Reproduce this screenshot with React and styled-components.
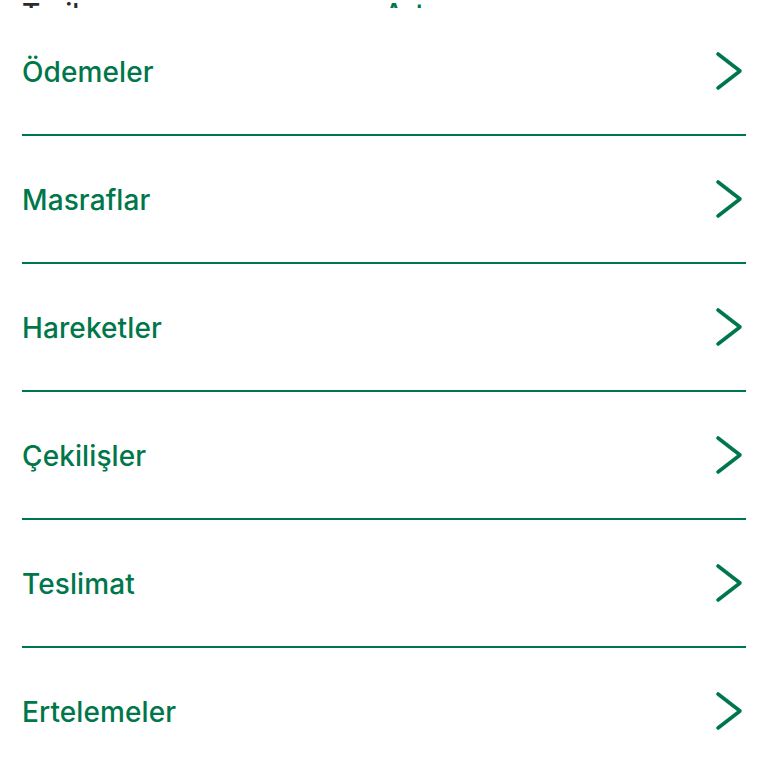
import React from "react";
import styled, { createGlobalStyle } from "styled-components";

const GREEN = "#00774b";

const Global = createGlobalStyle`
  html, body { margin: 0; padding: 0; background: #ffffff; }
  body { font-family: Inter, "Liberation Sans", Arial, sans-serif; }
`;

const Page = styled.div`
  padding: 0 22px;
  overflow: hidden;
  height: 768px;
  box-sizing: border-box;
`;

const Header = styled.div`
  display: grid;
  grid-template-columns: 1fr 1fr;
  height: 8px;
  overflow: hidden;
  align-items: end;
`;

const HeaderText = styled.span`
  font-size: 28px;
  font-weight: 500;
  line-height: 28px;
  margin-bottom: -2px;
  color: ${(p) => (p.$accent ? GREEN : "#2b2b2b")};
`;

const List = styled.ul`
  list-style: none;
  margin: 0;
  padding: 0;
`;

const Row = styled.li`
  display: flex;
  align-items: center;
  justify-content: space-between;
  height: 126px;
  border-bottom: 2px solid ${GREEN};
  padding-right: 3px;
`;

const Label = styled.span`
  font-size: 28px;
  font-weight: 500;
  letter-spacing: 0.1px;
  color: ${GREEN};
  margin-top: 1px;
`;

const Chevron = () => (
  <svg width="28" height="40" viewBox="0 0 28 40" fill="none">
    <polyline
      points="3,3 25,20 3,37"
      stroke={GREEN}
      strokeWidth="3.6"
      strokeLinecap="round"
      strokeLinejoin="round"
    />
  </svg>
);

const items = ["Ödemeler", "Masraflar", "Hareketler", "Çekilişler", "Teslimat", "Ertelemeler"];

export default function App() {
  return (
    <>
      <Global />
      <Page>
        <Header>
          <HeaderText>Tarih</HeaderText>
          <HeaderText $accent>Artış</HeaderText>
        </Header>
        <List>
          {items.map((t) => (
            <Row key={t}>
              <Label>{t}</Label>
              <Chevron />
            </Row>
          ))}
        </List>
      </Page>
    </>
  );
}
